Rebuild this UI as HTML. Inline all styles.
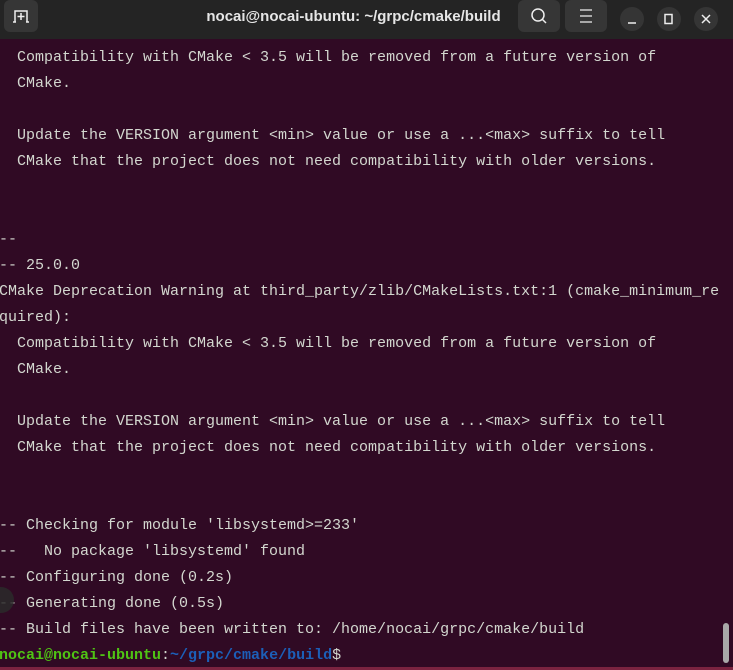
<!DOCTYPE html>
<html><head><meta charset="utf-8"><style>
body{margin:0;width:733px;height:670px;overflow:hidden;background:#300a24;position:relative;font-family:"Liberation Sans",sans-serif}
.tb{position:absolute;left:0;top:0;width:733px;height:39px;background:#242424}
.btn{position:absolute;top:0;height:32px;background:#363636;border-radius:6px}
.cb{position:absolute;top:7px;width:24px;height:24px;border-radius:50%;background:#353535}
.title{position:absolute;left:0;width:733px;top:8px;text-align:center;color:#e6e6e6;font-weight:bold;font-size:15px}
.term{position:absolute;left:-1px;top:45px;font-family:"Liberation Mono",monospace;font-size:15px;line-height:26px;color:#d3d7cf;white-space:pre}
.g{color:#4fc414;font-weight:bold}.b{color:#1c5fb8;font-weight:bold}
.sb{position:absolute;left:723px;top:623px;width:6px;height:40px;border-radius:3px;background:#a9a9a9}
.bot{position:absolute;left:0;top:667px;width:733px;height:3px;background:#7a2340}
</style></head><body>
<div class="tb">
<div class="btn" style="left:4px;width:34px"><svg width="34" height="32"><path d="M11 22V11h12v11M17 13v7M13.5 16.5h7M9 22h3M22 22h3" stroke="#eee" stroke-width="1.5" fill="none"/></svg></div>
<div class="title" style="left:-13px">nocai@nocai-ubuntu: ~/grpc/cmake/build</div>
<div class="btn" style="left:518px;width:42px"><svg width="42" height="32"><circle cx="20" cy="15" r="6" stroke="#eee" stroke-width="1.5" fill="none"/><path d="M24.5 19.5l3.5 3.5" stroke="#eee" stroke-width="1.5"/></svg></div>
<div class="btn" style="left:565px;width:42px"><svg width="42" height="32"><path d="M15 10h12M15 16h12M15 22h12" stroke="#eee" stroke-width="1.3"/></svg></div>
<div class="cb" style="left:620px"><svg width="24" height="24"><path d="M8 16h8" stroke="#eee" stroke-width="1.5"/></svg></div>
<div class="cb" style="left:657px"><svg width="24" height="24"><rect x="8" y="7.5" width="7" height="9" stroke="#eee" stroke-width="1.5" fill="none"/></svg></div>
<div class="cb" style="left:694px"><svg width="24" height="24"><path d="M8 8l8 8M16 8l-8 8" stroke="#eee" stroke-width="1.5"/></svg></div>
</div>
<div class="term">  Compatibility with CMake &lt; 3.5 will be removed from a future version of
  CMake.

  Update the VERSION argument &lt;min&gt; value or use a ...&lt;max&gt; suffix to tell
  CMake that the project does not need compatibility with older versions.


--
-- 25.0.0
CMake Deprecation Warning at third_party/zlib/CMakeLists.txt:1 (cmake_minimum_re
quired):
  Compatibility with CMake &lt; 3.5 will be removed from a future version of
  CMake.

  Update the VERSION argument &lt;min&gt; value or use a ...&lt;max&gt; suffix to tell
  CMake that the project does not need compatibility with older versions.


-- Checking for module 'libsystemd&gt;=233'
--   No package 'libsystemd' found
-- Configuring done (0.2s)
-- Generating done (0.5s)
-- Build files have been written to: /home/nocai/grpc/cmake/build
<span class="g">nocai@nocai-ubuntu</span>:<span class="b">~/grpc/cmake/build</span>$</div>
<div style="position:absolute;left:-12px;top:587px;width:26px;height:26px;border-radius:50%;background:#2a2a2a;opacity:.85"></div>
<div class="sb"></div>
<div class="bot"></div>
</body></html>
